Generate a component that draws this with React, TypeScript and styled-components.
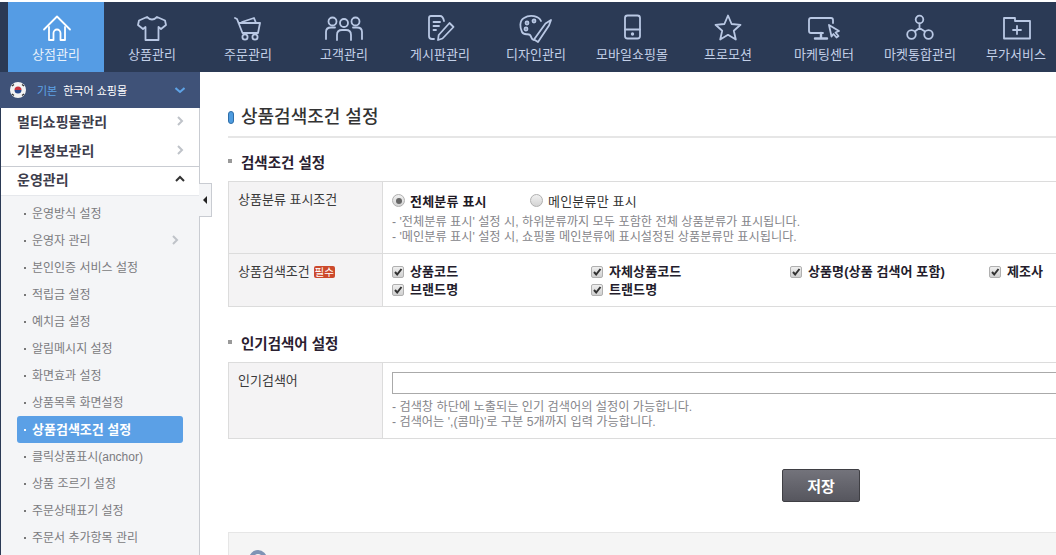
import React from "react";
import styled, { createGlobalStyle } from "styled-components";

const Global = createGlobalStyle`
  html, body { margin: 0; padding: 0; background: #fff; }
  body { font-family: "Liberation Sans", "Noto Sans CJK KR", sans-serif; }
  * { box-sizing: border-box; }
`;

const Page = styled.div`
  width: 1056px;
  height: 555px;
  overflow: hidden;
  padding-top: 2px;
  background: #fff;
`;

const Header = styled.header`
  display: flex;
  height: 70px;
  padding-left: 8px;
  background: #2b3a55;
`;

const Tab = styled.a<{ $active?: boolean }>`
  flex: 0 0 96px;
  display: flex;
  flex-direction: column;
  align-items: center;
  padding-top: 10px;
  background: ${(p) => (p.$active ? "#559ce4" : "transparent")};
  color: ${(p) => (p.$active ? "#e8f1fb" : "#c3d0e8")};
  font-size: 13px;
  line-height: 18px;
  white-space: nowrap;
  svg {
    display: block;
    margin-bottom: 2px;
    fill: none;
    stroke: ${(p) => (p.$active ? "#ffffff" : "#b9c8e4")};
    stroke-width: 1.8;
    stroke-linejoin: round;
    stroke-linecap: round;
  }
`;

const Body = styled.div`
  display: flex;
  height: 483px;
`;

const Sidebar = styled.aside`
  position: relative;
  flex: 0 0 200px;
  border-left: 1px solid #2b3a55;
  border-right: 1px solid #c9ccd2;
  background: #f4f5f7;
`;

const Shop = styled.div`
  display: flex;
  align-items: center;
  height: 36px;
  margin-left: -1px;
  margin-right: -1px;
  padding: 0 15px 1px 9px;
  background: #3f5278;
  font-size: 11px;
  color: #fff;
`;

const Flag = styled.svg`
  flex: none;
  margin-right: 10px;
`;

const ShopKind = styled.span`
  color: #5ea3e6;
  margin-right: 6px;
`;

const ShopName = styled.span`
  flex: 1;
`;

const MainItem = styled.div<{ $line?: boolean; $open?: boolean }>`
  display: flex;
  align-items: center;
  justify-content: space-between;
  height: ${(p) => (p.$open ? "30px" : "29px")};
  padding: 0 14px 4px 16px;
  background: #fff;
  color: #3d3d4c;
  font-size: 14px;
  font-weight: 700;
  border-top: ${(p) => (p.$line ? "1px solid #c9ccd2" : "none")};
  border-bottom: ${(p) => (p.$open ? "1px solid #e6e8ec" : "none")};
`;

const SubList = styled.ul`
  list-style: none;
  margin: 0;
  padding: 4px 0 0 16px;
`;

const SubItem = styled.li<{ $active?: boolean }>`
  position: relative;
  display: flex;
  align-items: center;
  justify-content: space-between;
  width: 166px;
  height: 27px;
  padding: 0 3px 2px 15px;
  border-radius: 3px;
  background: ${(p) => (p.$active ? "#5ba0e6" : "transparent")};
  color: ${(p) => (p.$active ? "#fff" : "#7b7b80")};
  font-size: ${(p) => (p.$active ? "13px" : "12px")};
  font-weight: ${(p) => (p.$active ? 700 : 400)};
  white-space: nowrap;
  &::before {
    content: "";
    position: absolute;
    left: 7px;
    top: 13px;
    width: 2px;
    height: 2px;
    background: ${(p) => (p.$active ? "#fff" : "#777")};
  }
`;

const Toggle = styled.div`
  position: absolute;
  left: 198px;
  top: 111px;
  display: flex;
  align-items: center;
  justify-content: center;
  width: 13px;
  height: 34px;
  background: #f4f5f7;
  border: 1px solid #c9ccd2;
  border-left: none;
  &::before {
    content: "";
    border-style: solid;
    border-width: 4px 4px 4px 0;
    border-color: transparent #222 transparent transparent;
  }
`;

const Main = styled.main`
  flex: 1;
  min-width: 0;
  padding-left: 28px;
  overflow: hidden;
`;

const Title = styled.h1`
  display: flex;
  align-items: center;
  gap: 7px;
  width: 1000px;
  height: 36px;
  margin: 30px 0 0;
  padding-bottom: 4px;
  border-bottom: 2px solid #e6e6e6;
  color: #333;
  font-size: 18px;
  font-weight: 500;
  line-height: 28px;
`;

const TitleMark = styled.i`
  width: 6px;
  height: 13px;
  border-radius: 3px;
  background: #4e9ce0;
  border: 1px solid #2f6ea8;
`;

const Section = styled.h2<{ $gap: number }>`
  display: flex;
  align-items: center;
  gap: 9px;
  height: 24px;
  margin: ${(p) => p.$gap}px 0 7px;
  padding-bottom: 2px;
  color: #2a2030;
  font-size: 14.5px;
  font-weight: 700;
  &::before {
    content: "";
    width: 4px;
    height: 4px;
    background: #999;
  }
`;

const Table = styled.div`
  width: 1000px;
  border-bottom: 1px solid #dcdcdc;
  border-left: 1px solid #dcdcdc;
`;

const Row = styled.div<{ $h: number }>`
  display: grid;
  grid-template-columns: 154px 1fr;
  height: ${(p) => p.$h}px;
  border-top: 1px solid #dcdcdc;
`;

const Th = styled.div`
  display: flex;
  align-items: flex-start;
  gap: 4px;
  padding: 8px 0 0 9px;
  border-right: 1px solid #dcdcdc;
  background: #f4f3f4;
  color: #3a3a3a;
  font-size: 13px;
  line-height: 20px;
`;

const Td = styled.div`
  padding: 8px 0 0 9px;
`;

const Badge = styled.span`
  margin-top: 4px;
  width: 21px;
  height: 12px;
  border-radius: 2px;
  background: #cc4a2c;
  color: #fff;
  font-size: 10.5px;
  line-height: 12px;
  text-align: center;
`;

const Radios = styled.div`
  display: flex;
  align-items: center;
  height: 21px;
  color: #333;
  font-size: 13px;
`;

const RadioLabel = styled.label<{ $checked?: boolean; $w: number }>`
  display: flex;
  align-items: center;
  gap: 5px;
  width: ${(p) => p.$w}px;
  font-weight: ${(p) => (p.$checked ? 700 : 400)};
  color: ${(p) => (p.$checked ? "#1f1a26" : "#333")};
  letter-spacing: 0.2px;
`;

const RadioDot = styled.span<{ $checked?: boolean }>`
  flex: none;
  display: flex;
  align-items: center;
  justify-content: center;
  width: 13px;
  height: 13px;
  border-radius: 50%;
  border: 1px solid #b0b0b0;
  background: linear-gradient(#f0f0f0, #d4d4d4);
  &::after {
    content: "";
    width: 6px;
    height: 6px;
    border-radius: 50%;
    background: ${(p) => (p.$checked ? "#666" : "transparent")};
  }
`;

const Note = styled.p<{ $first?: boolean }>`
  margin: ${(p) => (p.$first ? "4px" : "0")} 0 0;
  color: #85858a;
  font-size: 12.2px;
  line-height: 15px;
  white-space: nowrap;
`;

const Checks = styled.div`
  display: grid;
  grid-template-columns: repeat(4, 199px);
  grid-auto-rows: 18px;
  margin-top: 1px;
`;

const CheckLabel = styled.label`
  display: flex;
  align-items: center;
  gap: 6px;
  color: #241d2c;
  font-size: 13px;
  font-weight: 700;
  letter-spacing: 0.1px;
  white-space: nowrap;
`;

const CheckText = styled.span`
  padding-bottom: 3px;
`;

const CheckBox = styled.span`
  flex: none;
  display: flex;
  align-items: center;
  justify-content: center;
  width: 12px;
  height: 12px;
  border-radius: 2px;
  border: 1px solid #b0b0b0;
  background: linear-gradient(#efefef, #d0d0d0);
  svg {
    display: block;
  }
`;

const KeywordInput = styled.input`
  display: block;
  width: 800px;
  height: 22px;
  margin: 1px 0 6px;
  padding: 0 4px;
  border: 1px solid #aaa;
  background: #fff;
  outline: none;
`;

const Actions = styled.div`
  display: flex;
  justify-content: flex-start;
  padding: 30px 0 30px 554px;
`;

const SaveButton = styled.button`
  width: 78px;
  height: 33px;
  padding: 0;
  border: 1px solid #3f3f44;
  border-radius: 2px;
  background: linear-gradient(#73737b, #56565e);
  color: #fff;
  font-family: inherit;
  font-size: 15px;
  font-weight: 700;
`;

const Help = styled.div`
  display: flex;
  align-items: flex-start;
  gap: 12px;
  width: 1000px;
  height: 60px;
  padding: 17px 0 0 20px;
  background: #f5f5f5;
  border: 1px solid #e6e6e6;
  color: #222;
  font-size: 13px;
  font-weight: 700;
  line-height: 24px;
`;

const HelpIcon = styled.i`
  flex: none;
  width: 18px;
  height: 18px;
  border-radius: 50%;
  border: 4px solid #7f93b5;
  background: #f5f5f5;
`;

const Ico = ({ children }: { children: React.ReactNode }) => (
  <svg width="40" height="32" viewBox="0 0 40 32">
    {children}
  </svg>
);

const tabs: { label: string; icon: React.ReactNode }[] = [
  {
    label: "상점관리",
    icon: (
      <Ico>
        <path d="M8 17.5 L21 4.5 L34 17.5" />
        <path d="M13 15 V28 H17.5 V21 a3.5 3.5 0 0 1 7 0 V28 H29 V15" />
      </Ico>
    ),
  },
  {
    label: "상품관리",
    icon: (
      <Ico>
        <path d="M15 5 L7 8.5 L6 13 L11 17 L13.5 15 V28 H26.5 V15 L29 17 L34 13 L33 8.5 L25 5 Q20 10 15 5 Z" />
      </Ico>
    ),
  },
  {
    label: "주문관리",
    icon: (
      <Ico>
        <path d="M7 6 L9 7 L14.5 21 H30 L32 11 H10.5" />
        <path d="M14 10 L26 6 L28 11" />
        <circle cx="17" cy="25" r="2.6" />
        <circle cx="27" cy="25" r="2.6" />
      </Ico>
    ),
  },
  {
    label: "고객관리",
    icon: (
      <Ico>
        <circle cx="8.5" cy="9.5" r="4" />
        <circle cx="20" cy="11" r="4" />
        <circle cx="31.5" cy="9.5" r="4" />
        <path d="M2 27 V20 Q2 15.5 7 15.5 H11" />
        <path d="M38 27 V20 Q38 15.5 33 15.5 H29" />
        <path d="M13 28 V23 Q13 18 18 18 H22 Q27 18 27 23 V28" />
      </Ico>
    ),
  },
  {
    label: "게시판관리",
    icon: (
      <Ico>
        <path d="M24 9 Q23 4 20 4 H11 Q9 4 9 6 V24 Q9 27 12 27 H14" />
        <path d="M13.5 10 H20 M13.5 14 H19 M13.5 18 H16" />
        <path d="M29.5 11 L33.5 15 L22.5 26.5 L18 28 L18.7 23 Z" />
      </Ico>
    ),
  },
  {
    label: "디자인관리",
    icon: (
      <Ico>
        <path d="M25 9 C23 4 14 2 8 6 C3 9 4 16 6 20 C8 24 12 21 14 23 C16 25 15 28 18 28" />
        <circle cx="11" cy="11" r="1.5" />
        <circle cx="18" cy="9" r="1.5" />
        <circle cx="10" cy="17" r="1.5" />
        <path d="M35 8 L33 13.5 L22 30 L18 27.5 L29.5 11.5 Z" />
      </Ico>
    ),
  },
  {
    label: "모바일쇼핑몰",
    icon: (
      <Ico>
        <rect x="13" y="3.5" width="15" height="23" rx="2.5" />
        <path d="M13 17.5 H28" />
        <circle cx="20.5" cy="22" r="0.8" />
      </Ico>
    ),
  },
  {
    label: "프로모션",
    icon: (
      <Ico>
        <path d="M20 3.5 L23.6 12 L32.5 12.8 L25.8 18.7 L27.8 27.5 L20 22.8 L12.2 27.5 L14.2 18.7 L7.5 12.8 L16.4 12 Z" />
      </Ico>
    ),
  },
  {
    label: "마케팅센터",
    icon: (
      <Ico>
        <path d="M19 21 H7 Q5 21 5 19 V8 Q5 6 7 6 H27 Q29 6 29 8 V11" />
        <path d="M17 21 V26 M11 26.5 H23" strokeWidth="2.4" />
        <path d="M25 13 L35 19 L31.5 20.5 L34.5 24 L32.5 25.5 L29.5 22 L27.5 24.5 Z" />
      </Ico>
    ),
  },
  {
    label: "마켓통합관리",
    icon: (
      <Ico>
        <circle cx="19.5" cy="7.5" r="3.8" />
        <circle cx="11.5" cy="22.5" r="4.3" />
        <circle cx="28.5" cy="22.5" r="4.3" />
        <path d="M19.5 11.3 V16 L14.8 19.5 M19.5 16 L25 19.5" />
      </Ico>
    ),
  },
  {
    label: "부가서비스",
    icon: (
      <Ico>
        <path d="M8 26.5 V6 H19 V9 H34 V26.5 Z" />
        <path d="M21 14 V22 M17 18 H25" />
      </Ico>
    ),
  },
];

const subs: { label: string; more?: boolean; active?: boolean }[] = [
  { label: "운영방식 설정" },
  { label: "운영자 관리", more: true },
  { label: "본인인증 서비스 설정" },
  { label: "적립금 설정" },
  { label: "예치금 설정" },
  { label: "알림메시지 설정" },
  { label: "화면효과 설정" },
  { label: "상품목록 화면설정" },
  { label: "상품검색조건 설정", active: true },
  { label: "클릭상품표시(anchor)" },
  { label: "상품 조르기 설정" },
  { label: "주문상태표기 설정" },
  { label: "주문서 추가항목 관리" },
];

const Chevron = ({ dir = "right", color = "#bfc3c9", w = 2 }: { dir?: "right" | "up" | "down"; color?: string; w?: number }) => (
  <svg width="10" height="10" viewBox="0 0 10 10" fill="none" stroke={color} strokeWidth={w}>
    {dir === "right" && <path d="M3 1 L7 5 L3 9" />}
    {dir === "up" && <path d="M1 7 L5 3 L9 7" />}
    {dir === "down" && <path d="M0.5 3 L5 7 L9.5 3" />}
  </svg>
);

const Check = () => (
  <svg width="10" height="10" viewBox="0 0 10 10" fill="none" stroke="#333" strokeWidth="2">
    <path d="M2 5 L4.2 7.5 L8.5 2" />
  </svg>
);

const checks = ["상품코드", "자체상품코드", "상품명(상품 검색어 포함)", "제조사", "브랜드명", "트랜드명"];

export default function App() {
  return (
    <Page>
      <Global />
      <Header>
        {tabs.map((t, i) => (
          <Tab key={t.label} $active={i === 0}>
            {t.icon}
            {t.label}
          </Tab>
        ))}
      </Header>
      <Body>
        <Sidebar>
          <Shop>
            <Flag width="18" height="18" viewBox="0 0 18 18">
              <circle cx="9" cy="9" r="8" fill="#f3f3f3" />
              <path d="M5.5 9 a3.5 3.5 0 0 1 7 0 z" fill="#c8323c" />
              <path d="M5.5 9 a3.5 3.5 0 0 0 7 0 z" fill="#2a4a8c" />
              <path d="M3 5 L5 3.5 M13 3.5 L15 5 M3 13 L5 14.5 M13 14.5 L15 13" stroke="#333" strokeWidth="1.2" />
            </Flag>
            <ShopKind>기본</ShopKind>
            <ShopName>한국어 쇼핑몰</ShopName>
            <Chevron dir="down" color="#5ea3e6" />
          </Shop>
          <MainItem>
            멀티쇼핑몰관리
            <Chevron />
          </MainItem>
          <MainItem>
            기본정보관리
            <Chevron />
          </MainItem>
          <MainItem $line $open>
            운영관리
            <Chevron dir="up" color="#333" />
          </MainItem>
          <SubList>
            {subs.map((s) => (
              <SubItem key={s.label} $active={s.active}>
                {s.label}
                {s.more && <Chevron />}
              </SubItem>
            ))}
          </SubList>
          <Toggle />
        </Sidebar>
        <Main>
          <Title>
            <TitleMark />
            상품검색조건 설정
          </Title>
          <Section $gap={12}>검색조건 설정</Section>
          <Table>
            <Row $h={72}>
              <Th>상품분류 표시조건</Th>
              <Td>
                <Radios>
                  <RadioLabel $checked $w={138}>
                    <RadioDot $checked />
                    전체분류 표시
                  </RadioLabel>
                  <RadioLabel $w={200}>
                    <RadioDot />
                    메인분류만 표시
                  </RadioLabel>
                </Radios>
                <Note $first>- '전체분류 표시' 설정 시, 하위분류까지 모두 포함한 전체 상품분류가 표시됩니다.</Note>
                <Note>- '메인분류 표시' 설정 시, 쇼핑몰 메인분류에 표시설정된 상품분류만 표시됩니다.</Note>
              </Td>
            </Row>
            <Row $h={53}>
              <Th>
                상품검색조건 <Badge>필수</Badge>
              </Th>
              <Td>
                <Checks>
                  {checks.map((c) => (
                    <CheckLabel key={c}>
                      <CheckBox>
                        <Check />
                      </CheckBox>
                      <CheckText>{c}</CheckText>
                    </CheckLabel>
                  ))}
                </Checks>
              </Td>
            </Row>
          </Table>
          <Section $gap={24}>인기검색어 설정</Section>
          <Table>
            <Row $h={76}>
              <Th>인기검색어</Th>
              <Td>
                <KeywordInput />
                <Note>- 검색창 하단에 노출되는 인기 검색어의 설정이 가능합니다.</Note>
                <Note>- 검색어는 ',(콤마)'로 구분 5개까지 입력 가능합니다.</Note>
              </Td>
            </Row>
          </Table>
          <Actions>
            <SaveButton>저장</SaveButton>
          </Actions>
          <Help>
            <HelpIcon />
            상품검색어 및 설정 도움말
          </Help>
        </Main>
      </Body>
    </Page>
  );
}
